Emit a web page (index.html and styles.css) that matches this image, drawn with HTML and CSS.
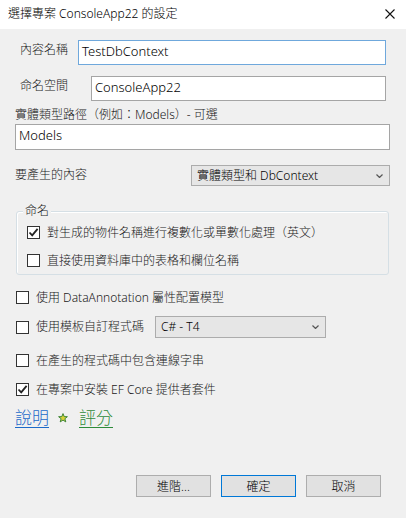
FILE: index.html
```html
<!doctype html>
<html lang="zh-Hant">
    <head>
        <meta charset="utf-8">
        <meta name="viewport" content="width=device-width, initial-scale=1">
        <title>選擇專案 ConsoleApp22 的設定</title>
        <link rel="stylesheet" href="styles.css">
    </head>
    <body>
        <div class="dialog">
            <div class="titlebar">
                <span class="title">選擇專案 ConsoleApp22 的設定</span>
                <svg class="close" width="10" height="10" viewBox="0 0 10 10">
                    <path d="M0.5 0.5 L9.5 9.5 M9.5 0.5 L0.5 9.5" stroke="#111" stroke-width="1.1" fill="none" />
                </svg>
            </div>

            <div class="content">
                <div class="field-row first">
                    <label class="field-label name-label">內容名稱</label>
                    <div class="textbox focused">TestDbContext</div>
                </div>
                <div class="field-row second">
                    <label class="field-label ns-label">命名空間</label>
                    <div class="textbox">ConsoleApp22</div>
                </div>

                <label class="block-label">實體類型路徑（例如：Models）- 可選</label>
                <div class="textbox wide">Models</div>

                <div class="combo-row">
                    <label class="field-label">要產生的內容</label>
                    <div class="combo main-combo">
                        <span>實體類型和 DbContext</span>
                        <svg class="chevron" width="7" height="4" viewBox="0 0 7 4">
                            <path d="M0.5 0.5 L3.5 3.5 L6.5 0.5" stroke="#555" stroke-width="1.2" fill="none" />
                        </svg>
                    </div>
                </div>

                <div class="group">
                    <span class="legend">命名</span>
                    <div class="check-row">
                        <span class="box checked">
                            <svg width="11" height="11" viewBox="0 0 11 11">
                                <path d="M1.5 5.5 L4.2 8.3 L9.6 1.8" stroke="#222" stroke-width="1.8" fill="none" />
                            </svg>
                        </span>
                        <span>對生成的物件名稱進行複數化或單數化處理（英文）</span>
                    </div>
                    <div class="check-row">
                        <span class="box"></span>
                        <span>直接使用資料庫中的表格和欄位名稱</span>
                    </div>
                </div>

                <div class="check-row outer annot">
                    <span class="box"></span>
                    <span>使用 DataAnnotation 屬性配置模型</span>
                </div>

                <div class="check-row outer template">
                    <span class="box"></span>
                    <span class="template-text">使用模板自訂程式碼</span>
                    <div class="combo small-combo">
                        <span>C# - T4</span>
                        <svg class="chevron" width="7" height="4" viewBox="0 0 7 4">
                            <path d="M0.5 0.5 L3.5 3.5 L6.5 0.5" stroke="#555" stroke-width="1.2" fill="none" />
                        </svg>
                    </div>
                </div>

                <div class="check-row outer">
                    <span class="box"></span>
                    <span>在產生的程式碼中包含連線字串</span>
                </div>

                <div class="check-row outer">
                    <span class="box checked">
                        <svg width="11" height="11" viewBox="0 0 11 11">
                            <path d="M1.5 5.5 L4.2 8.3 L9.6 1.8" stroke="#222" stroke-width="1.8" fill="none" />
                        </svg>
                    </span>
                    <span>在專案中安裝 EF Core 提供者套件</span>
                </div>

                <div class="links">
                    <a class="help" href="#">說明</a>
                    <a class="rate" href="#">
                        <svg class="star" width="10" height="10" viewBox="0 0 10 10">
                            <path d="M5 0.6 L6.2 3.6 L9.4 3.7 L6.9 5.7 L7.8 8.9 L5 7.1 L2.2 8.9 L3.1 5.7 L0.6 3.7 L3.8 3.6 Z" fill="#d7d23a" stroke="#2f7d2f" stroke-width="0.9" />
                        </svg>
                        <span>評分</span>
                    </a>
                </div>
            </div>

            <div class="buttons">
                <button>進階...</button>
                <button class="default">確定</button>
                <button>取消</button>
            </div>
        </div>
    </body>
</html>
```

FILE: styles.css
```css
* {
    margin: 0;
    padding: 0;
    box-sizing: border-box;
}

body {
    background: #F0F0F0;
    color: #1a1a1a;
    font-family: "Noto Sans", "Noto Sans CJK TC", sans-serif;
    font-size: 12px;
    font-weight: 300;
    line-height: 16px;
}

.dialog {
    width: 406px;
    height: 518px;
    display: flex;
    flex-direction: column;
}

.titlebar {
    height: 29px;
    background: #fff;
    display: flex;
    align-items: center;
    justify-content: space-between;
    padding: 0 11px 0 8px;
}

.title {
    font-size: 12px;
    margin-top: -1px;
    color: #000;
}

.close {
    display: block;
    margin-top: -1px;
}

.content {
    padding: 0 16px 0 15px;
    flex: 1;
}

.field-row {
    display: flex;
    height: 25px;
}

.field-row.first {
    margin-top: 11px;
}

.field-row.second {
    margin-top: 11px;
}

.field-label {
    padding-top: 2px;
}

.name-label {
    width: 63px;
    padding-left: 5px;
}

.ns-label {
    width: 76px;
    padding-left: 5px;
}

.textbox {
    flex: 1;
    height: 25px;
    background: #fff;
    border: 1px solid #A5A5A5;
    padding: 2px 0 0 3px;
    font-size: 13px;
    margin-right: 4px;
    color: #000;
}

.textbox.focused {
    border-color: #6FA8DC;
}

.block-label {
    display: block;
    margin-top: 6px;
    height: 17px;
}

.textbox.wide {
    height: 26px;
    margin-right: 0;
}

.combo-row {
    display: flex;
    justify-content: space-between;
    margin-top: 15px;
    height: 21px;
}

.combo {
    display: flex;
    align-items: center;
    justify-content: space-between;
    background: #E6E6E6;
    border: 1px solid #ACACAC;
    padding: 0 6px 0 5px;
    font-size: 12px;
    color: #000;
}

.main-combo {
    width: 199px;
    height: 21px;
}

.chevron {
    display: block;
}

.group {
    position: relative;
    margin: 25px 1px 0 1px;
    height: 64px;
    border: 1px solid #D5DFE5;
    border-radius: 3px;
    box-shadow: inset 1px 1px 0 #fff;
    padding: 14px 0 0 10px;
    display: flex;
    flex-direction: column;
    gap: 15px;
}

.legend {
    position: absolute;
    top: -9px;
    left: 6px;
    padding: 0 2px;
    background: #F0F0F0;
}

.check-row {
    display: flex;
    align-items: center;
    height: 13px;
    gap: 7px;
    white-space: nowrap;
}

.box {
    width: 13px;
    height: 13px;
    border: 1px solid #333;
    background: #fff;
    display: flex;
    align-items: center;
    justify-content: center;
    flex: none;
}

.check-row.outer {
    margin: 16px 0 0 1px;
}

.check-row.annot {
    margin-top: 16px;
}

.check-row.template {
    height: 22px;
    margin-top: 12px;
}

.template-text {
    width: 112px;
}

.small-combo {
    width: 171px;
    height: 22px;
}

.links {
    display: flex;
    gap: 7px;
    margin-top: 11px;
    font-size: 17px;
    line-height: 22px;
}

.links a {
    text-decoration: underline;
    text-underline-offset: 3px;
    text-decoration-thickness: 1px;
}

.help {
    color: #1C6AC9;
}

.rate {
    color: #2E8B3A;
    display: flex;
    align-items: center;
    gap: 11px;
}

.star {
    display: block;
    margin-left: 2px;
}

.buttons {
    display: flex;
    justify-content: flex-end;
    gap: 10px;
    padding: 0 25px 21px 0;
}

button {
    width: 75px;
    height: 22px;
    background: #E1E1E1;
    border: 1px solid #ADADAD;
    font-family: "Noto Sans", "Noto Sans CJK TC", sans-serif;
    font-size: 12px;
    font-weight: 300;
    color: #000;
}

button.default {
    border-color: #0078D7;
}
```
